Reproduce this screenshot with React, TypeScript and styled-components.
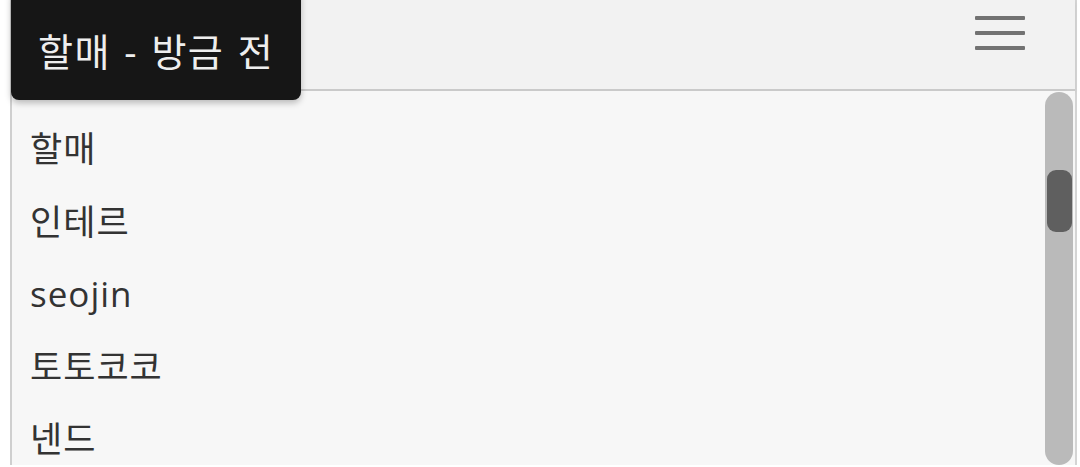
import styled, { createGlobalStyle } from "styled-components";

const users = ["할매", "인테르", "seojin", "토토코코", "넨드"];

/* ------------------ Styled ------------------ */

const GlobalStyle = createGlobalStyle`
    html, body {
        margin: 0;
        padding: 0;
        background: #ffffff;
        overflow: hidden;
    }
    body {
        font-family: "Open Sans", "Noto Sans CJK KR", sans-serif;
    }
`;

const Panel = styled.div`
    position: relative;
    margin-left: 10px;
    width: 1063px;
    border-left: 2px solid #cfcfcf;
    border-right: 2px solid #d4d4d4;
`;

const Header = styled.div`
    height: 91px;
    background: #f2f2f2;
    border-bottom: 2px solid #cacaca;
    box-shadow: 0 2px 4px rgba(0, 0, 0, 0.05);
    display: flex;
    justify-content: flex-end;
    align-items: flex-start;
    padding-right: 50px;
    box-sizing: border-box;
`;

const MenuButton = styled.div`
    width: 50px;
    padding-top: 16px;
    display: flex;
    flex-direction: column;
    gap: 11px;
`;

const MenuLine = styled.span`
    display: block;
    height: 4px;
    border-radius: 1px;
    background: #727272;
`;

const Tooltip = styled.div`
    position: absolute;
    left: -1px;
    top: -12px;
    height: 112px;
    padding: 10px 27px 0;
    box-sizing: border-box;
    display: flex;
    align-items: center;
    background: #161616;
    color: #eeeeee;
    font-size: 38px;
    letter-spacing: 1.5px;
    word-spacing: 2px;
    border-radius: 8px;
    box-shadow: 0 3px 6px rgba(0, 0, 0, 0.25);
    white-space: pre;
    z-index: 2;
`;

const Body = styled.div`
    display: flex;
    height: 374px;
    overflow: hidden;
    background: #f7f7f7;
`;

const List = styled.ul`
    flex: 1;
    margin: 0;
    padding: 22px 0 0 18px;
    list-style: none;
`;

const Item = styled.li`
    height: 72.5px;
    line-height: 72.5px;
    font-size: 35px;
    letter-spacing: 1px;
    color: #333333;
`;

const Track = styled.div`
    width: 28px;
    height: 373px;
    margin: 1px 2px 0 0;
    padding: 78px 1px 0 2px;
    box-sizing: border-box;
    background: #bababa;
    border-radius: 14px;
`;

const Thumb = styled.div`
    height: 62px;
    background: #5f5f5f;
    border-radius: 9px;
`;

/* ------------------ Component ------------------ */

export default function App() {
    return (
        <>
            <GlobalStyle />
            <Panel>
                <Tooltip>{"할매 - 방금 전"}</Tooltip>
                <Header>
                    <MenuButton>
                        <MenuLine />
                        <MenuLine />
                        <MenuLine />
                    </MenuButton>
                </Header>
                <Body>
                    <List>
                        {users.map((name) => (
                            <Item key={name}>{name}</Item>
                        ))}
                    </List>
                    <Track>
                        <Thumb />
                    </Track>
                </Body>
            </Panel>
        </>
    );
}
